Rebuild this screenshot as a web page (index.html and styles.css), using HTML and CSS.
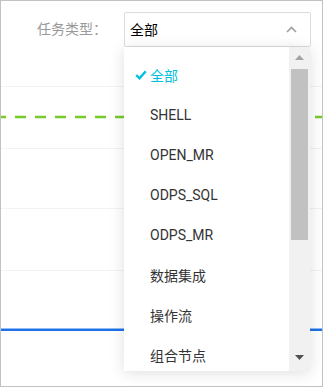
FILE: index.html
```html
<!DOCTYPE html>
<html lang="zh">
<head>
<meta charset="utf-8">
<link rel="stylesheet" href="styles.css">
</head>
<body>
<div class="frame">
  <div class="header">
    <span class="label">任务类型：</span>
    <div class="select">
      <span class="select-value">全部</span>
      <svg class="chevron" width="11" height="7" viewBox="0 0 11 7"><polyline points="1,6 5.5,1.5 10,6" fill="none" stroke="#a0a0a0" stroke-width="1.6"/></svg>
    </div>
  </div>
  <svg class="chart" width="321" height="300" viewBox="0 0 321 300">
    <line x1="0" y1="0.5" x2="321" y2="0.5" stroke="#f3f3f3" stroke-width="1"/>
    <line x1="0" y1="62.5" x2="321" y2="62.5" stroke="#f3f3f3" stroke-width="1"/>
    <line x1="0" y1="122.5" x2="321" y2="122.5" stroke="#f3f3f3" stroke-width="1"/>
    <line x1="0" y1="184.5" x2="321" y2="184.5" stroke="#f3f3f3" stroke-width="1"/>
    <line x1="-6" y1="31" x2="321" y2="31" stroke="#76cb2b" stroke-width="2.4" stroke-dasharray="11 9"/>
    <line x1="0" y1="242.5" x2="321" y2="242.5" stroke="#8dbdf5" stroke-width="1"/>
    <line x1="0" y1="244" x2="321" y2="244" stroke="#1f6fe8" stroke-width="2"/>
  </svg>
  <div class="dropdown">
    <ul class="options">
      <li class="option selected"><span class="check"><svg width="12" height="10" viewBox="0 0 12 10"><polyline points="1.2,5 4.5,8.3 10.8,1.2" fill="none" stroke="#00c1de" stroke-width="2.4"/></svg></span>全部</li>
      <li class="option"><span class="check"></span>SHELL</li>
      <li class="option"><span class="check"></span>OPEN_MR</li>
      <li class="option"><span class="check"></span>ODPS_SQL</li>
      <li class="option"><span class="check"></span>ODPS_MR</li>
      <li class="option"><span class="check"></span>数据集成</li>
      <li class="option"><span class="check"></span>操作流</li>
      <li class="option"><span class="check"></span>组合节点</li>
    </ul>
    <div class="scrollbar">
      <div class="sb-btn sb-up"><svg width="9" height="5" viewBox="0 0 9 5"><polygon points="0,5 4.5,0 9,5" fill="#a3a3a3"/></svg></div>
      <div class="sb-thumb"></div>
      <div class="sb-space"></div>
      <div class="sb-btn sb-down"><svg width="9" height="5" viewBox="0 0 9 5"><polygon points="0,0 9,0 4.5,5" fill="#505050"/></svg></div>
    </div>
  </div>
</div>
</body>
</html>
```

FILE: styles.css
```css
* { box-sizing: border-box; }
html, body { margin: 0; padding: 0; background: #fff; }
body { font-family: Roboto, "Noto Sans CJK SC", sans-serif; font-size: 14px; color: #333; }
.frame {
  position: relative;
  width: 323px;
  height: 387px;
  border: 1px solid #c2c2c2;
  overflow: hidden;
  background: #fff;
}
.header {
  height: 85px;
  display: flex;
  justify-content: flex-end;
  align-items: flex-start;
  padding: 11px 11px 0 0;
  gap: 17px;
}
.label {
  color: #999;
  line-height: 35px;
  font-size: 14px;
}
.select {
  width: 187px;
  height: 35px;
  border: 1px solid #dcdcdc;
  border-radius: 2px;
  display: flex;
  align-items: center;
  justify-content: space-between;
  padding: 0 13px 0 5px;
  color: #000;
}
.select-value { line-height: 20px; }
.chevron { display: block; margin-top: -1px; }
.chart { display: block; }
.dropdown {
  position: absolute;
  left: 123px;
  top: 46px;
  width: 186px;
  height: 324px;
  background: #fff;
  display: flex;
  box-shadow: 0 2px 14px rgba(0, 0, 0, 0.13);
}
.options {
  list-style: none;
  margin: 0;
  padding: 8px 0 0 0;
  flex: 1;
  overflow: hidden;
}
.option {
  height: 40px;
  display: flex;
  align-items: center;
  padding-left: 11px;
  color: #333;
  white-space: nowrap;
}
.option.selected { color: #00c1de; }
.check { width: 15px; display: flex; align-items: center; }
.check svg { display: block; }
.scrollbar {
  width: 21px;
  background: #f1f1f1;
  display: flex;
  flex-direction: column;
}
.sb-btn {
  height: 22px;
  display: flex;
  align-items: center;
  justify-content: center;
}
.sb-up svg { margin-top: -1px; }
.sb-thumb {
  height: 171px;
  width: 17px;
  margin-left: 2px;
  background: #c1c1c1;
}
.sb-space { flex: 1; }
.sb-down { height: 26px; }
.sb-down svg { margin-top: -2px; }
```
